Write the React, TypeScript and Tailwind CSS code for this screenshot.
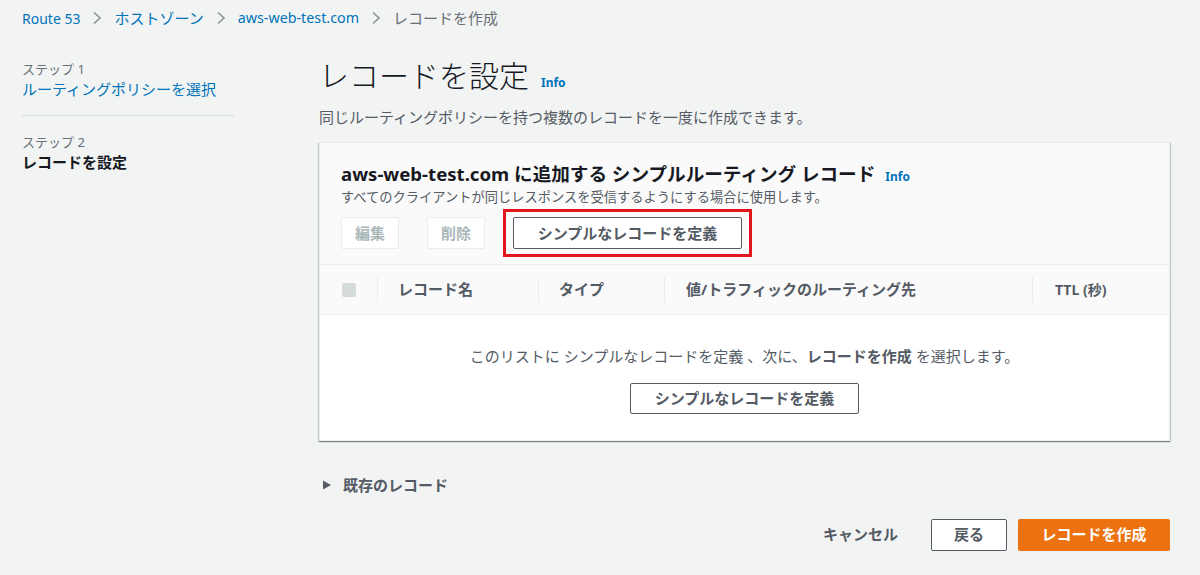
import React from "react";

const font = { fontFamily: '"Noto Sans", "Noto Sans CJK JP", sans-serif' };

function Chevron() {
  return (
    <svg width="12" height="14" viewBox="0 0 12 14" className="mx-[11px]">
      <path d="M3 1.5 L9 7 L3 12.5" fill="none" stroke="#879596" strokeWidth="1.6" />
    </svg>
  );
}

function Sep() {
  return <div className="w-px h-[26px] bg-[#eaeded]" />;
}

export default function App() {
  return (
    <div className="w-[1200px] h-[575px] bg-[#f2f3f3] text-[#16191f] overflow-hidden" style={font}>
      {/* breadcrumb */}
      <div className="flex items-center h-[36px] pl-[22px] text-[15px]">
        <span className="text-[#0073bb] text-[14px]">Route 53</span>
        <Chevron />
        <span className="text-[#0073bb]">ホストゾーン</span>
        <Chevron />
        <span className="text-[#0073bb] text-[14.3px]">aws-web-test.com</span>
        <Chevron />
        <span className="text-[#687078]">レコードを作成</span>
      </div>

      <div className="flex">
        {/* left nav */}
        <div className="w-[319px] pl-[22px] pt-[24px]">
          <div className="w-[212px]">
            <div className="text-[13px] text-[#687078] leading-[18px]">ステップ 1</div>
            <div className="text-[15px] text-[#0073bb] leading-[22px]">ルーティングポリシーを選択</div>
            <div className="h-px bg-[#d5dbdb] mt-[15px] mb-[17px]" />
            <div className="text-[13px] text-[#687078] leading-[18px]">ステップ 2</div>
            <div className="text-[15px] font-bold leading-[22px]">レコードを設定</div>
          </div>
        </div>

        {/* main */}
        <div className="w-[851px]">
          <div className="flex items-baseline pt-[20px]">
            <h1 className="text-[30px] font-light leading-[40px] text-[#16191f]">レコードを設定</h1>
            <span className="ml-[12px] text-[12px] font-bold text-[#0073bb]">Info</span>
          </div>
          <p className="mt-[11px] text-[15px] text-[#545b64] leading-[20px]">
            同じルーティングポリシーを持つ複数のレコードを一度に作成できます。
          </p>

          {/* card */}
          <div className="mt-[15px] bg-white border border-[#eaeded] shadow-[0_1px_1px_0_rgba(0,28,36,0.3),1px_1px_1px_0_rgba(0,28,36,0.15),-1px_1px_1px_0_rgba(0,28,36,0.15)]">
            <div className="bg-[#fafafa] px-[21px] pt-[18px] pb-[15px]">
              <div className="flex items-baseline">
                <span className="text-[18.6px] font-bold leading-[26px]">
                  aws-web-test.com に追加する シンプルルーティング レコード
                </span>
                <span className="ml-[10px] text-[12px] font-bold text-[#0073bb]">Info</span>
              </div>
              <div className="mt-[2px] text-[13.25px] text-[#545b64] leading-[16px]">
                すべてのクライアントが同じレスポンスを受信するようにする場合に使用します。
              </div>
              <div className="flex items-center mt-[12px]">
                <button className="h-[32px] w-[58px] border border-[#eaeded] rounded-[2px] bg-white text-[15px] font-bold text-[#aab7b8]">
                  編集
                </button>
                <button className="ml-[28px] h-[32px] w-[58px] border border-[#eaeded] rounded-[2px] bg-white text-[15px] font-bold text-[#aab7b8]">
                  削除
                </button>
                <div className="ml-[18px] -my-[8px] border-[3px] border-[#e4151f] p-[5px] px-[7px]">
                  <button className="h-[32px] w-[229px] border border-[#545b64] rounded-[2px] bg-white text-[15px] font-bold text-[#545b64]">
                    シンプルなレコードを定義
                  </button>
                </div>
              </div>
            </div>

            {/* table header */}
            <div className="flex items-center h-[51px] bg-[#fafafa] border-y border-[#eaeded] text-[15px] font-bold text-[#545b64]">
              <div className="ml-[22px] w-[14px] h-[14px] bg-[#d5dbdb] rounded-[2px]" />
              <div className="ml-[21px]"><Sep /></div>
              <div className="w-[160px] pl-[20px]">レコード名</div>
              <Sep />
              <div className="w-[125px] pl-[20px]">タイプ</div>
              <Sep />
              <div className="w-[367px] pl-[21px]">値/トラフィックのルーティング先</div>
              <Sep />
              <div className="pl-[22px] text-[14px]">TTL (秒)</div>
            </div>

            {/* body */}
            <div className="flex flex-col items-center pt-[31px] pb-[26px]">
              <div className="text-[15px] text-[#545b64] leading-[20px]">
                このリストに シンプルなレコードを定義 、次に、<b className="text-[#545b64]">レコードを作成</b> を選択します。
              </div>
              <button className="mt-[17px] h-[31px] w-[229px] border border-[#545b64] rounded-[2px] bg-white text-[15px] font-bold text-[#545b64]">
                シンプルなレコードを定義
              </button>
            </div>
          </div>

          {/* existing records */}
          <div className="flex items-center mt-[33px] text-[15px] font-bold text-[#545b64]">
            <svg width="10" height="10" viewBox="0 0 10 10" className="ml-[3px] mr-[11px]">
              <path d="M1 0.5 L9 5 L1 9.5 Z" fill="#545b64" />
            </svg>
            既存のレコード
          </div>

          {/* footer */}
          <div className="flex items-center justify-end mt-[22px]">
            <span className="text-[15px] font-bold text-[#545b64] mr-[33px]">キャンセル</span>
            <button className="h-[32px] w-[76px] border border-[#545b64] rounded-[2px] bg-white text-[15px] font-bold text-[#545b64]">
              戻る
            </button>
            <button className="ml-[11px] h-[32px] w-[152px] rounded-[2px] bg-[#ec7211] text-[15px] font-bold text-white">
              レコードを作成
            </button>
          </div>
        </div>
      </div>
    </div>
  );
}
